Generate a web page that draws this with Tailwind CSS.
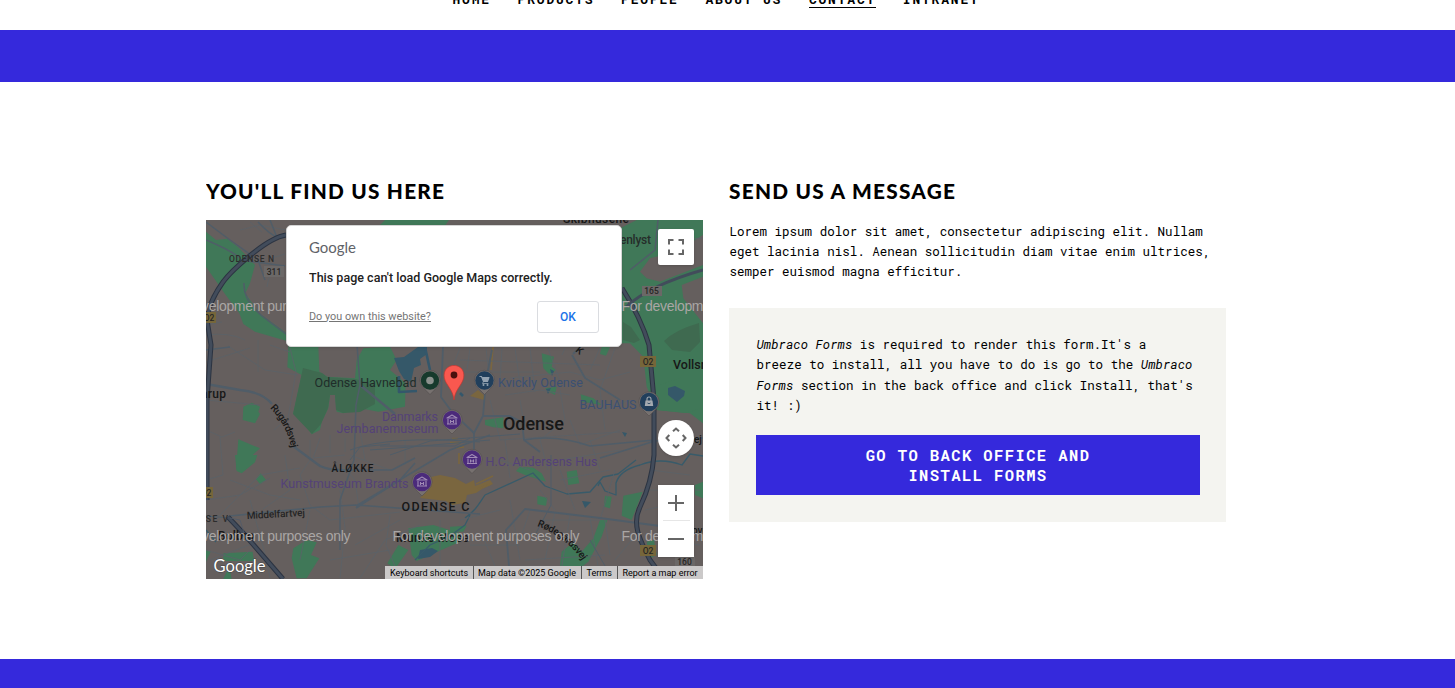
<!DOCTYPE html>
<html lang="en">
<head>
<meta charset="utf-8">
<title>Contact</title>
<script src="https://cdn.jsdelivr.net/npm/@tailwindcss/browser@4"></script>
</head>
<body class="h-[688px] overflow-hidden bg-white text-black font-['Roboto_Mono','Liberation_Mono',monospace]">
<header class="flex h-[30px] items-start pl-[452.500px]">
  <nav class="-mt-[9px] flex gap-[26.700px] text-[13px] leading-[16px] font-bold tracking-[1.800px] whitespace-nowrap">
    <a>HOME</a><a>PRODUCTS</a><a>PEOPLE</a><a>ABOUT US</a><a class="border-b border-black">CONTACT</a><a>INTRANET</a>
  </nav>
</header>
<div class="h-[52px] bg-[#3529dc]"></div>
<main class="flex h-[577px] gap-[26px] pt-[96px] pl-[206px]">
  <section class="w-[497px]">
    <h2 class="h-[42px]"><svg class="block h-[28px] w-[300px] font-[Lato]"><text x="0" y="20.500" textLength="238" font-weight="900" font-size="20.800">YOU'LL FIND US HERE</text></svg></h2>
    <div class="relative h-[359px] overflow-hidden bg-[#655f5e] font-[Roboto]">
      <svg class="block h-[359px] w-[497px]" viewBox="206 220 497 359" fill="none" stroke-linejoin="round">
        <!-- parks -->
        <g fill="#407858">
          <g transform="translate(200 170) scale(.33333)">
            <path d="M18 185L48 210 82 206 115 232 165 285 150 340 136 370 178 430 258 488V512L165 485 130 462 118 430 75 372 42 325 18 290ZM520 185L560 145H750L720 190Z"/>
          </g>
          <g transform="translate(450 210) scale(.33333)">
            <path d="M500 60L560 30H759V75L680 125 600 145 570 185 590 205 630 215 759 165V200L695 225 700 265 759 340V640L720 610 620 600 590 530 580 440 540 400H500ZM275 430L312 440 305 470 318 480 300 495 280 475ZM455 410L480 412 468 437 450 432ZM285 535L320 530 315 555 295 545Z"/>
          </g>
          <g transform="translate(200 340) scale(.33333)">
            <path d="M265 18H355L358 95 382 110 465 115 470 60 490 25 570 20 590 60 570 90 617 130 615 200 535 215 480 205 430 220 410 215 405 165 390 165 385 205 365 245 360 270 335 283 320 262 280 220 305 105 262 82ZM130 200L155 188 180 200 175 215 180 222 165 250 128 240ZM115 298L180 325 108 390Z"/>
          </g>
          <g transform="translate(450 340) scale(.33333)">
            <path d="M105 240L160 232 160 265 130 262 105 255ZM270 250L320 238 341 258 300 265ZM392 163L430 175 455 195 395 185ZM540 400L590 530 600 600 640 660 735 665 759 600V750L650 655 605 640Z" clip-path="none" fill-opacity="0"/>
            <path d="M105 240L160 232 160 265 130 262 105 255ZM392 163L430 175 455 195 395 185Z"/>
          </g>
          <g transform="translate(200 455) scale(.33333)">
            <path d="M105 0H172L165 22 125 55 110 48ZM182 55L198 75 180 88 168 72ZM280 280L320 255 350 262 333 300 358 310 320 370H290L275 310ZM595 270L625 285 585 342 562 325ZM625 220L700 210 780 235V260L690 300 650 318 635 300ZM70 295L158 290 162 318 70 318ZM18 285L32 290 18 320ZM80 350L90 345 95 372H70Z"/>
          </g>
          <g transform="translate(450 455) scale(.33333)">
            <path d="M198 48L210 35 250 38 275 55 288 80 255 70 225 60ZM350 50L380 45 388 85 355 90ZM262 122L292 128 288 152 262 148ZM465 122L485 125 480 160 462 155ZM520 122L578 110 545 195 515 182ZM450 195L472 195 455 245 415 320 390 340 330 332 335 290 370 262 395 290 430 250ZM735 90L759 80V130L735 120ZM590 260L612 255 620 300 600 310ZM0 215L50 212 40 230H0Z"/>
          </g>
        </g>
        <g fill="#3f6a50">
          <path d="M623 322L631 327 640 340 634 343 623 340ZM664 341Q675 330 699 323L700 342 690 352 672 350ZM303 368L322 373 327 377 355 379 375 384V404L360 412 343 413 336 410 335 395H330L328 408 321 424 312 434 293 414Z"/>
        </g>
        <path d="M703 343V408L685 413 657 410 650 395 648 372 660 385 680 378Z" fill="#407858"/>
        <!-- centre -->
        <g fill="#7a663f">
          <path d="M431 477L440 475 455 478 466 484 474 480 475 486 490 480 493 484 482 489 476 493 467 495 465 503 452 505 446 501 420 498 428 489ZM470 396L478 390 485 396 484 400Z"/>
        </g>
        <path d="M452 438.500H458M450 442.500H461M456 448L464 447M459 453V464M476 484L493 476M478 489L491 484M493 347L491 370" stroke="#7a663f" stroke-width="1.600"/>
        <!-- water -->
        <g fill="#355869">
          <path d="M394 358L404 357 418 347H427V354L420 359 421 365 414 368 411 382 404 379 399 371ZM668 388L675 386 685 391 684 396 677 402 668 395ZM582 501L591 502 585 508ZM546 389L551 388 548 394ZM550 369L554 371 552 376ZM420 550L432 548 438 551 430 557 418 559ZM622 432L627 433 625 437Z"/>
        </g>
        <path d="M399 376V392L417 391M425 347L430 370M460 393L463 396" stroke="#34576b" stroke-width="2.600"/>
        <path d="M465 518C477 509 478 505 485 495L533 473 545 486 567 494 590 492 603 477 618 474 636 460M598 486L600 482 605 491 616 495 616 483Q620 470 640 465 660 457 682 465L690 454 703 456M206 530L216 542M415 560L430 545 450 536 465 525 470 515" stroke="#385b6a" stroke-width="1.300"/>
        <!-- streets -->
        <g stroke="#5b6268" stroke-width=".8">
          <path d="M206 362L250 348M228 346L265 370 298 375M258 340V372M290 348L296 372 288 418 274 430M206 430L222 437 235 432M220 437L223 475 206 480M310 440V460L300 475M320 438L313 458 345 455M330 435V453M345 438V452M206 500L240 495 270 478M215 520L260 475 300 468M250 500L263 546 270 578M262 540L210 560M300 475L310 505 330 520 400 512M285 455L290 490 263 509M340 490L345 528 340 578M359 508L355 480 340 462M355 545L400 520M360 578L385 540 420 525M390 515L386 545 400 578M440 520V578M310 510L300 560M230 480L270 495 300 500M206 550L240 560 255 545M330 560L390 550M206 400L260 405M270 345L290 352M405 440V465M350 455L390 470M360 430L365 460"/>
          <path d="M460 348L453 366M470 348L467 370M486 348L488 366M502 348L500 380M515 348L520 384M530 348L535 392M548 348L560 382M565 348L562 355M600 348L590 370M615 348L600 390M460 360L600 365M455 372H540M510 378L570 372 600 380 630 372M490 400L500 440M505 395L540 390 570 395M520 400L525 430M560 390L565 420 540 440M500 440L620 432M540 440L548 470M570 420L580 445 620 430M600 390L605 430M590 440L600 470M620 450L560 460M500 460L530 470M510 500L520 560M530 510L520 540M555 512L545 560M570 515L560 578M590 518L600 578M605 520L610 555M640 530L615 560M460 520L500 510M470 545H520M480 530L500 578M540 520H600M525 560L605 555M615 470L600 520M560 470L575 510M640 490H700M645 510L690 500M660 540L700 545M560 480L610 470M510 478L505 440M540 490L555 510M600 410L630 400M660 440L690 430M650 470L690 475"/>
          <path d="M206 335Q230 332 245 340M222 322L206 325M240 230L260 225 286 230M250 222L262 232M267 287Q268 270 285 265M285 254L272 258M680 240L703 238"/>
        </g>
        <g stroke="#505d68">
          <path d="M206 222L230 240 258 260 265 280M240 260L285 266M244 283Q243 300 262 316L290 337M258 222Q280 245 286 235M270 220L278 240M206 240Q230 250 240 258M658 220L655 250 630 270" stroke-width="1.500"/>
          <path d="M206 384L240 390Q262 392 272 404M293 446Q305 455 320 466 330 471 350 470" stroke-width="2.300"/>
          <path d="M230 516L320 507 356 505 480 514M356 506L450 450 490 435M350 470H392L415 458M356 508L400 480 415 463" stroke-width="1.600"/>
          <path d="M357 345L360 385 356 405 354 460L340 500V550" stroke-width="1.500"/>
          <path d="M360 385L395 414" stroke-width="2.300"/>
          <path d="M510 578L506 530 525 509 600 518 660 526M572 355L585 378 620 400M573 354L580 347M443 347L441 397 452 412 474 433 483 416 486 380 492 350M474 433V465M483 416H510L522 422 524 440 540 452" stroke-width="1.800"/>
          <path d="M524 440Q555 434 590 446L655 440M600 458L655 441 703 438M206 350L230 347" stroke-width="1.600"/>
          <path d="M350 450Q390 435 480 442M370 450L410 447 490 440M380 446H455L470 438M390 455L430 441 520 434M350 460L360 447 390 444M551 455V505L535 535M590 540L612 578M206 516L230 518" stroke-width="1"/>
        </g>
        <!-- ring roads -->
        <g stroke="#2c3442" stroke-width="5">
          <path d="M286 235Q273 237 252 254T223 282Q208 303 207 320L211 345 207 400V500M622 288Q641 318 649 345L654 400V455Q652 482 640 507C631 525 641 542 650 560L664 579M228 517L245 535 283 579"/>
        </g>
        <g stroke="#424c5b" stroke-width="3">
          <path d="M286 235Q273 237 252 254T223 282Q208 303 207 320L211 345 207 400V500M622 288Q641 318 649 345L654 400V455Q652 482 640 507C631 525 641 542 650 560L664 579M228 517L245 535 283 579M626 307Q650 285 703 270"/>
        </g>
        <path d="M230 518L240 520 245 536" stroke="#505b69" stroke-width=".8"/>
        <!-- road shields -->
        <g font-family="Roboto" font-size="8.500" font-weight="500" text-anchor="middle">
          <g fill="#76663a"><rect x="199" y="312" width="17" height="11"/><rect x="196" y="487" width="17" height="11"/><rect x="640" y="356" width="16" height="11"/><rect x="640" y="545" width="16" height="11"/></g>
          <g fill="#6b6867"><rect x="264" y="266" width="20" height="11"/><rect x="642" y="286" width="20" height="10"/><rect x="675" y="556" width="20" height="10"/></g>
          <g fill="#272625"><text x="209" y="321">O2</text><text x="206" y="496">O2</text><text x="648" y="365">O2</text><text x="648" y="554">O2</text><text x="274" y="275">311</text><text x="651.500" y="294">165</text><text x="684.500" y="565">160</text></g>
        </g>
        <!-- labels -->
        <g font-family="Roboto" font-weight="500" fill="#171717">
          <text x="229" y="261.500" font-size="8.500" fill="#2c2c2c" textLength="45">ODENSE N</text>
          <text x="563" y="223" font-size="12" textLength="66">Skibhusene</text>
          <text x="620" y="244" font-size="12" fill="#252d2a" textLength="31">enlyst</text>
          <text x="673" y="369" font-size="12.500">Vollsmose</text>
          <text x="201" y="398" font-size="12" textLength="25">arup</text>
          <text x="503" y="430" font-size="18" textLength="61">Odense</text>
          <text x="331.500" y="472" font-size="10" textLength="42">ÅLØKKE</text>
          <text x="401.500" y="511" font-size="12.500" textLength="68">ODENSE C</text>
          <text x="198" y="521.500" font-size="8.500" fill="#2c2c2c" textLength="30">NSE V</text>
          <text x="247" y="519" font-size="10" fill="#242424" textLength="58" transform="rotate(-3 247 519)">Middelfartvej</text>
          <text x="218" y="540" font-size="12" textLength="36">Bolbro</text>
          <text x="396" y="542" font-size="12" textLength="73">Munke Mose</text>
          <text x="694" y="443" font-size="10">ej</text><text x="692" y="534" font-size="10">ove</text>
          <text x="575" y="351" font-size="10" transform="rotate(40 575 351)">K</text>
          <path id="rg" d="M270 408Q288 426 292 452" fill="none"/><text font-size="10"><textPath href="#rg" textLength="46">Rugårdsvej</textPath></text>
          <path id="rd" d="M537 526Q568 537 585 565" fill="none"/><text font-size="10"><textPath href="#rd" textLength="58">Rødegårdsvej</textPath></text>
        </g>
        <g font-family="Roboto" font-size="12.500">
          <text x="314.500" y="387" textLength="102" fill="#202d2a">Odense Havnebad</text>
          <g fill="#544278"><text x="382" y="420.500" textLength="56">Danmarks</text><text x="336.500" y="433" textLength="102">Jernbanemuseum</text><text x="280.500" y="488" textLength="128">Kunstmuseum Brandts</text><text x="485.500" y="466" textLength="112">H.C. Andersens Hus</text></g>
          <g fill="#3b5073"><text x="498" y="387" textLength="85">Kvickly Odense</text><text x="579.500" y="409" textLength="57">BAUHAUS</text></g>
        </g>
        <!-- place pins -->
        <defs>
          <path id="pin" d="M-10.200 0A10.200 10.200 0 1 1 10.200 0Q10 5 4.500 9.500L0 14-4.500 9.500Q-10 5-10.200 0Z" fill="#77716f" stroke="#504c4b" stroke-width=".6"/>
          <g id="museum"><use href="#pin"/><circle r="9.200" fill="#4b2a7b"/><path d="M-5-2L0-5 5-2ZM-4-1V4M4-1V4M-5 4H5M-1.500 0V3M1.500 0V3M-1.500 1.500H1.500" stroke="#a08bb5" stroke-width="1.100"/></g>
        </defs>
        <use href="#museum" x="452" y="420"/><use href="#museum" x="472" y="459.500"/><use href="#museum" x="422" y="482"/>
        <g transform="translate(430 380.500)"><use href="#pin"/><circle r="9.200" fill="#173a2c"/><circle r="3.800" fill="#8b918d"/></g>
        <g transform="translate(484.500 380.500)"><use href="#pin"/><circle r="9.200" fill="#213f5c"/><path d="M-5-4H-3L-1 1H3L4.500-3H-2" stroke="#94a3b1" stroke-width="1.100" fill="#94a3b1"/><path d="M-1 1L-2 3H4" stroke="#94a3b1" stroke-width=".8"/><circle cx="-1" cy="4.500" r="1" fill="#94a3b1"/><circle cx="3" cy="4.500" r="1" fill="#94a3b1"/></g>
        <g transform="translate(649 402)"><use href="#pin"/><circle r="9.200" fill="#213f5c"/><path d="M-3.500-1.500H3.500L4.200 4H-4.200Z" fill="#a4aab0"/><path d="M-2-1V-3Q-2-5 0-5T2-3V-1" stroke="#a4aab0" stroke-width="1.100"/><path d="M-1.500 1Q0 2.500 1.500 1" stroke="#213f5c" stroke-width=".8"/></g>
        <path d="M454 400C453 392 450 389 447 384 441 375 445 365.500 454 365.500S467 375 461 384C458 389 455 392 454 400Z" fill="#f9584f" stroke="#c63731" stroke-width=".7"/><circle cx="454" cy="375" r="3.400" fill="#4a100e"/>
        <g font-family="Liberation Sans" font-size="14" fill="#aaa6a5">
          <text x="163.500" y="311" textLength="187">For development purposes only</text><text x="621.500" y="311" textLength="187">For development purposes only</text>
          <text x="163.500" y="540.500" textLength="187">For development purposes only</text><text x="392.500" y="540.500" textLength="187">For development purposes only</text><text x="621.500" y="540.500" textLength="187">For development purposes only</text>
        </g>
        <text x="213.500" y="572" font-family="Lato" font-size="17" fill="#fff" stroke="#444" stroke-width="1" paint-order="stroke" textLength="52" lengthAdjust="spacingAndGlyphs">Google</text>
      </svg>

      <div class="absolute top-[5px] left-[80px] flex h-[122px] w-[336px] flex-col rounded-[5px] border border-[#d5d5d5] bg-white pr-[22px] pl-[22px] shadow-sm">
        <svg class="mt-[12px] h-[22px] w-[60px] shrink-0"><text x="0" y="15" font-family="Lato" font-size="15" fill="#5f6368" textLength="47" lengthAdjust="spacingAndGlyphs">Google</text></svg>
        <svg class="mt-[7px] h-[20px] w-[280px] shrink-0"><text x="0" y="15" font-family="Roboto" font-weight="500" font-size="12.500" fill="#212121" textLength="243.500">This page can't load Google Maps correctly.</text></svg>
        <div class="mt-[14px] flex items-center justify-between">
          <a class="relative -top-px text-[10.850px] leading-[13px] text-[#757575] underline">Do you own this website?</a>
          <button class="h-[32px] w-[62px] rounded-[3px] border border-[#dadce0] text-[12px] font-medium text-[#1a73e8]">OK</button>
        </div>
      </div>

      <div class="absolute top-[9px] left-[452px] flex size-[36px] items-center justify-center rounded-[2px] bg-white shadow">
        <svg class="size-[16px]" viewBox="0 0 16 16" fill="none" stroke="#666" stroke-width="2"><path d="M1 5.500V1H5.500M10.500 1H15V5.500M15 10.500V15H10.500M5.500 15H1V10.500"/></svg>
      </div>
      <div class="absolute top-[200px] left-[452px] flex size-[36px] items-center justify-center rounded-full bg-white shadow">
        <svg class="size-[22px]" viewBox="0 0 22 22" fill="none" stroke="#666" stroke-width="2"><path d="M8 4.300L11 1.500 14 4.300M8 17.700L11 20.500 14 17.700M4.300 8L1.500 11 4.300 14M17.700 8L20.500 11 17.700 14"/></svg>
      </div>
      <div class="absolute top-[265px] left-[452px] flex h-[72px] w-[36px] flex-col items-center bg-white shadow">
        <svg class="h-[35px] w-[16px]" viewBox="0 0 16 35" stroke="#666" stroke-width="2"><path d="M0 18H16M8 10V26"/></svg>
        <div class="h-px w-[27px] bg-[#e6e6e6]"></div>
        <svg class="h-[36px] w-[16px]" viewBox="0 0 16 36" stroke="#666" stroke-width="2"><path d="M0 18H16"/></svg>
      </div>
      <div class="absolute right-0 bottom-0 flex h-[13px] w-[318px] bg-[#cbc9c9] text-[9px] leading-[14px] whitespace-nowrap text-black">
        <span class="w-[88px] pl-[5px]">Keyboard shortcuts</span>
        <span class="w-[108px] border-l border-[#555] pl-[4px]">Map data ©2025 Google</span>
        <span class="w-[36px] border-l border-[#555] pl-[4.500px]">Terms</span>
        <span class="w-[86px] border-l border-[#555] pl-[4.500px]">Report a map error</span>
      </div>
    </div>
  </section>

  <section class="w-[497px]">
    <h2 class="h-[42px]"><svg class="block h-[28px] w-[300px] font-[Lato]"><text x="0" y="20.500" textLength="226" font-weight="900" font-size="20.800">SEND US A MESSAGE</text></svg></h2>
    <p class="mt-px pl-[0.500px] text-[12.530px] leading-[20px] whitespace-nowrap">Lorem ipsum dolor sit amet, consectetur adipiscing elit. Nullam<br>eget lacinia nisl. Aenean sollicitudin diam vitae enim ultrices,<br>semper euismod magna efficitur.</p>
    <div class="mt-[27px] h-[214px] bg-[#f4f4f0] px-[27px] pt-[26px] pb-[27px]">
      <p class="h-[81px] pl-[0.500px] text-[12.530px] leading-[20.300px] tracking-[0.025px] whitespace-nowrap"><em>Umbraco Forms</em> is required to render this form.It's a<br>breeze to install, all you have to do is go to the <em>Umbraco<br>Forms</em> section in the back office and click Install, that's<br>it! :)</p>
      <a class="mt-[20px] flex h-[60px] w-[444px] items-center justify-center bg-[#3529dc] text-center text-[15.500px] leading-[20px] font-bold tracking-[1.400px] text-white">GO TO BACK OFFICE AND<br>INSTALL FORMS</a>
    </div>
  </section>
</main>
<footer class="h-[29px] bg-[#3529dc]"></footer>
</body>
</html>
